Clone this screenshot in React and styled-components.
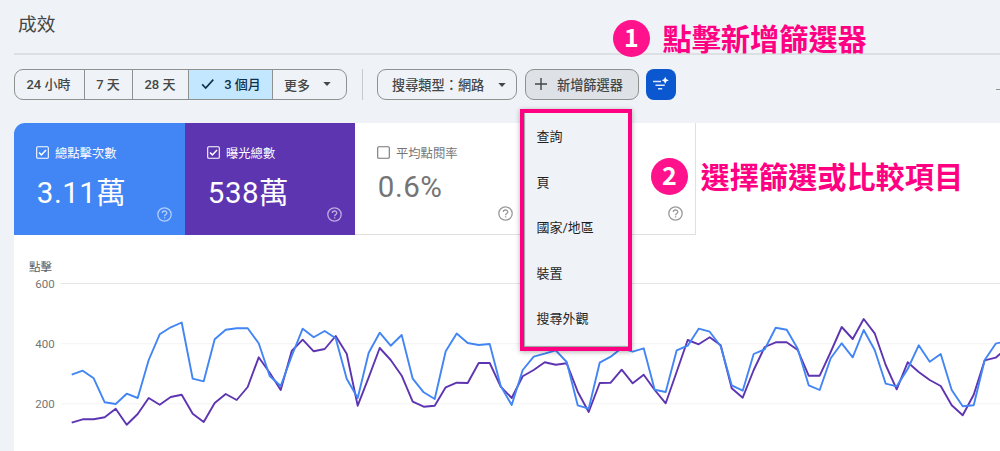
import React from 'react';
import styled, { createGlobalStyle } from 'styled-components';

const GlobalStyle = createGlobalStyle`
  * {
    box-sizing: border-box;
  }

  body {
    margin: 0;
    background: #eff3f8;
    font-family: Roboto, 'Noto Sans CJK TC', sans-serif;
    color: #444746;
  }
`;

const Page = styled.main`
  position: relative;
  display: flex;
  flex-direction: column;
  width: 1000px;
  height: 451px;
  padding-left: 14px;
  overflow: hidden;
`;

const Header = styled.header`
  flex: none;
  height: 55px;
  padding: 10px 0 0 4px;
  border-bottom: 2px solid #dce0e4;
`;

const Title = styled.h1`
  margin: 0;
  font-size: 18.7px;
  font-weight: 400;
  line-height: 30px;
`;

const Toolbar = styled.div`
  flex: none;
  display: flex;
  align-items: center;
  height: 67.5px;
  padding-bottom: 8.5px;
`;

const RangeGroup = styled.div`
  display: flex;
  width: 333px;
  height: 31px;
  border: 1px solid #8d918f;
  border-radius: 9px;
  overflow: hidden;
`;

const RangeButton = styled.button`
  flex: none;
  display: flex;
  align-items: center;
  justify-content: center;
  gap: ${({ $gap }) => $gap || 0}px;
  width: ${({ $width }) => $width}px;
  padding: ${({ $padding }) => $padding || '0 1px 2px 0'};
  border: 0;
  border-left: ${({ $first }) => ($first ? 0 : '1px solid #8d918f')};
  background: ${({ $active }) => ($active ? '#c2e7ff' : 'transparent')};
  color: ${({ $active }) => ($active ? '#10304a' : 'inherit')};
  font: 500 13px Roboto, 'Noto Sans CJK TC', sans-serif;
`;

const Divider = styled.div`
  width: 1px;
  height: 31px;
  margin: 0 14px 0 15px;
  background: #c7cacd;
`;

const Chip = styled.button`
  display: flex;
  align-items: center;
  width: ${({ $width }) => $width}px;
  height: 31px;
  margin-right: 8px;
  padding: ${({ $padding }) => $padding};
  gap: ${({ $gap }) => $gap}px;
  border: 1px solid #8d918f;
  border-radius: 9px;
  background: ${({ $filled }) => ($filled ? '#dee1e6' : 'transparent')};
  color: inherit;
  font: 500 13.2px Roboto, 'Noto Sans CJK TC', sans-serif;
  white-space: nowrap;
`;

const AiButton = styled.button`
  display: flex;
  align-items: center;
  justify-content: center;
  width: 30px;
  height: 31px;
  margin-left: -1px;
  padding: 0 0 2px;
  border: 0;
  border-radius: 8px;
  background: #0b57d0;
`;

const Dash = styled.span`
  width: 4px;
  height: 1px;
  margin: 9px 0 0 auto;
  background: #8d918f;
`;

const Report = styled.section`
  flex: 1;
  display: flex;
  flex-direction: column;
  background: #fff;
  border-top-left-radius: 11px;
  overflow: hidden;
`;

const Cards = styled.div`
  flex: none;
  display: flex;
  height: 112.5px;
`;

const Card = styled.div`
  display: flex;
  flex-direction: column;
  width: ${({ $width }) => $width}px;
  padding: 20px ${({ $bg }) => ($bg ? 13 : 12)}px 13px 22px;
  border: solid #e0e0e0;
  border-width: ${({ $bg }) => ($bg ? 0 : '0 1px 1px 0')};
  background: ${({ $bg }) => $bg || '#fff'};
  color: ${({ $bg }) => ($bg ? '#fff' : '#757575')};
`;

const CardLabel = styled.div`
  display: flex;
  align-items: center;
  gap: 6px;
  height: 20px;
  font-size: 12.3px;
`;

const CardValue = styled.div`
  flex: 1;
  padding: ${({ $offset }) => $offset}px 0 0 0.8px;
  font-size: 29.5px;
  line-height: 38px;
  letter-spacing: 0.5px;
  white-space: nowrap;
`;

const CardFooter = styled.div`
  display: flex;
  flex: none;
  justify-content: flex-end;
  height: 15px;
  margin-top: -12px;
  color: ${({ $dim }) => ($dim ? 'rgba(255, 255, 255, 0.6)' : '#9a9a9a')};
`;

const Chart = styled.svg`
  display: block;
  font-family: Roboto, 'Noto Sans CJK TC', sans-serif;
  font-size: 12px;
`;

const Menu = styled.ul`
  position: absolute;
  top: 109px;
  left: 520px;
  display: flex;
  flex-direction: column;
  width: 112px;
  height: 242px;
  margin: 0;
  padding: 1px 0 0 12.5px;
  border: 4px solid #ff0083;
  background: #eff3f8;
  box-shadow: 0 1px 5px rgba(0, 0, 0, 0.3), inset 1px -1px 1px rgba(0, 0, 0, 0.35);
  list-style: none;
`;

const MenuItem = styled.li`
  height: 45.6px;
  color: #1f1f1f;
  font-size: 13px;
  line-height: 45px;
`;

const Callout = styled.div`
  position: absolute;
  top: ${({ $top }) => $top}px;
  left: ${({ $left }) => $left}px;
  display: flex;
  align-items: center;
  gap: ${({ $gap }) => $gap}px;
  height: 37px;
  color: #ff0083;
  font: 700 29.2px 'Noto Sans CJK TC', sans-serif;
  white-space: nowrap;
`;

const Step = styled.span`
  display: flex;
  align-items: center;
  justify-content: center;
  width: 37px;
  height: 37px;
  padding-bottom: 5px;
  border-radius: 50%;
  background: #ff128b;
  color: #fff;
  font-size: 25px;
`;

const CalloutText = styled.span`
  height: 38px;
  line-height: 34px;
`;

const STEP_X = 11;
const START_X = 71.7;

const clicks = [
  374.7, 370.7, 378.3, 402.3, 404, 393.7, 398, 360, 334.3, 327.3, 322.5, 378.7,
  381.3, 339.3, 329.7, 328.3, 328.3, 343.3, 376, 386, 356, 328.7, 337.3, 331,
  338.3, 378.7, 398, 352.7, 332.7, 345.7, 335, 378.7, 392.3, 399, 351.3, 333.5,
  343, 345, 344, 386, 405, 370, 356.7, 353.7, 350.3, 362, 405.3, 408.7, 362.7,
  356.7, 348, 351.7, 348.3, 389.7, 392, 350.3, 345.7, 328.7, 331.7, 346.3,
  385.3, 390.7, 354, 349.3, 327.7, 329.7, 348.7, 385.3, 390, 358.3, 343.3,
  357.3, 330, 350, 383.7, 386.3, 369, 345.3, 361.7, 354, 390, 406.3, 405.3,
  360, 343.7, 341
];

const impressions = [
  422.7, 419.3, 419.3, 417.3, 408.7, 424.7, 414, 398, 404.7, 397, 394.7, 413.7,
  422, 403, 394, 400, 387, 357.3, 372.7, 390, 351, 339.7, 351.3, 349, 336,
  353.7, 405.7, 377.3, 348, 360, 375.7, 401.7, 406.7, 405.7, 387.3, 382.7, 383,
  363, 363, 386.7, 398, 376.3, 370, 362.3, 364.7, 363.3, 391.7, 412, 383,
  382.7, 369.7, 383.3, 374.7, 390, 403.3, 371.7, 340, 344.3, 337.3, 345.3,
  388.3, 397.7, 370, 347, 342.3, 342.3, 350, 375.7, 375.7, 352, 327, 339, 319,
  333.3, 365, 389.3, 362.3, 372, 380, 386, 405.3, 415.3, 394.7, 360.3, 357.7,
  348
];

const gridLines = [
  { label: '600', y: 283.5, color: '#e6e6e6' },
  { label: '400', y: 343.7, color: '#f3f3f3' },
  { label: '200', y: 403.8, color: '#f3f3f3' }
];

const menuItems = ['查詢', '頁', '國家/地區', '裝置', '搜尋外觀'];

const cards = [
  { label: '總點擊次數', value: '3.11萬', bg: '#4285f4', width: 171, offset: 11 },
  { label: '曝光總數', value: '538萬', bg: '#5e35b1', width: 170, offset: 11 },
  { label: '平均點閱率', value: '0.6%', width: 171, offset: 5 }
];

function toPoints(values) {
  return values.map((y, i) => `${START_X + i * STEP_X},${y}`).join(' ');
}

function CheckIcon() {
  return (
    <svg width="14" height="12" viewBox="0 0 14 12" fill="none">
      <path d="M1.2 6.4L4.7 10L12.3 1.6" stroke="currentColor" strokeWidth="1.6" />
    </svg>
  );
}

function CaretIcon() {
  return (
    <svg width="8" height="4" viewBox="0 0 8 4">
      <path d="M0.3 0H7.7L4 4Z" fill="currentColor" />
    </svg>
  );
}

function PlusIcon() {
  return (
    <svg width="13" height="13" viewBox="0 0 13 13">
      <path d="M6 0V12M0 6H12" stroke="currentColor" strokeWidth="1.4" />
    </svg>
  );
}

function FilterSparkIcon() {
  return (
    <svg width="18" height="16" viewBox="0 0 18 16">
      <path
        d="M1 5.6H9M3.5 9.2H12.8M6 12.8H10.2"
        stroke="#dce8ff"
        strokeWidth="1.5"
      />
      <path
        d="M13.2 0.7L14.3 3.2L16.8 4.3L14.3 5.4L13.2 7.9L12.1 5.4L9.6 4.3L12.1 3.2Z"
        fill="#fff"
      />
    </svg>
  );
}

function Checkbox({ checked }) {
  return (
    <svg width="13" height="13" viewBox="0 0 13 13" fill="none">
      <rect x="0.7" y="0.7" width="11.6" height="11.6" rx="1" stroke="currentColor" strokeWidth="1.1" />
      {checked && (
        <path d="M3 6.5L5.4 8.9L10 4" stroke="currentColor" strokeWidth="1.5" />
      )}
    </svg>
  );
}

function HelpIcon() {
  return (
    <svg width="15" height="15" viewBox="0 0 15 15" fill="none" stroke="currentColor">
      <circle cx="7.5" cy="7.5" r="6.7" strokeWidth="1.3" />
      <path d="M5.3 6.1C5.3 3.3 9.8 3.3 9.8 6C9.8 7.5 7.6 7.6 7.6 9.3" strokeWidth="1.3" />
      <path d="M7.6 10.3V11.6" strokeWidth="1.4" />
    </svg>
  );
}

function PerformanceChart() {
  return (
    <Chart width="986" height="216" viewBox="14 235 986 216">
      <text x="29" y="271" fill="#616161" fontSize="11.5">
        點擊
      </text>
      {gridLines.map(({ label, y, color }) => (
        <g key={label}>
          <text x="54.7" y={y + 4.3} fill="#757575" textAnchor="end" fontSize="11.5">
            {label}
          </text>
          <line x1="61" x2="1000" y1={y} y2={y} stroke={color} />
        </g>
      ))}
      <g fill="none" strokeWidth="1.9" strokeLinejoin="round">
        <polyline points={toPoints(impressions)} stroke="#5e35b1" />
        <polyline points={toPoints(clicks)} stroke="#4285f4" />
      </g>
    </Chart>
  );
}

export default function App() {
  return (
    <Page>
      <GlobalStyle />
      <Header>
        <Title>成效</Title>
      </Header>
      <Toolbar>
        <RangeGroup>
          <RangeButton $width={69} $first $padding="0 2px 2px 0">24 小時</RangeButton>
          <RangeButton $width={48}>7 天</RangeButton>
          <RangeButton $width={56}>28 天</RangeButton>
          <RangeButton $width={84} $gap={9} $padding="0 0 2px 1px" $active>
            <CheckIcon />
            3 個月
          </RangeButton>
          <RangeButton $width={74} $gap={13} $padding="0 4px 1px 0">
            更多
            <CaretIcon />
          </RangeButton>
        </RangeGroup>
        <Divider />
        <Chip $width={140} $padding="0 0 0 14px" $gap={13.5}>
          搜尋類型：網路
          <CaretIcon />
        </Chip>
        <Chip $width={114} $padding="0 0 0 9px" $gap={9} $filled>
          <PlusIcon />
          新增篩選器
        </Chip>
        <AiButton aria-label="AI">
          <FilterSparkIcon />
        </AiButton>
        <Dash />
      </Toolbar>
      <Report>
        <Cards>
          {cards.map(({ label, value, bg, width, offset }) => (
            <Card key={label} $bg={bg} $width={width}>
              <CardLabel>
                <Checkbox checked={Boolean(bg)} />
                {label}
              </CardLabel>
              <CardValue $offset={offset}>{value}</CardValue>
              <CardFooter $dim={Boolean(bg)}>
                <HelpIcon />
              </CardFooter>
            </Card>
          ))}
          <Card $width={170}>
            <CardLabel />
            <CardValue $offset={5} />
            <CardFooter>
              <HelpIcon />
            </CardFooter>
          </Card>
        </Cards>
        <PerformanceChart />
      </Report>
      <Menu>
        {menuItems.map(item => (
          <MenuItem key={item}>{item}</MenuItem>
        ))}
      </Menu>
      <Callout $top={20} $left={613} $gap={12.5}>
        <Step>1</Step>
        <CalloutText>點擊新增篩選器</CalloutText>
      </Callout>
      <Callout $top={158} $left={651} $gap={12.5}>
        <Step>2</Step>
        <CalloutText>選擇篩選或比較項目</CalloutText>
      </Callout>
    </Page>
  );
}
